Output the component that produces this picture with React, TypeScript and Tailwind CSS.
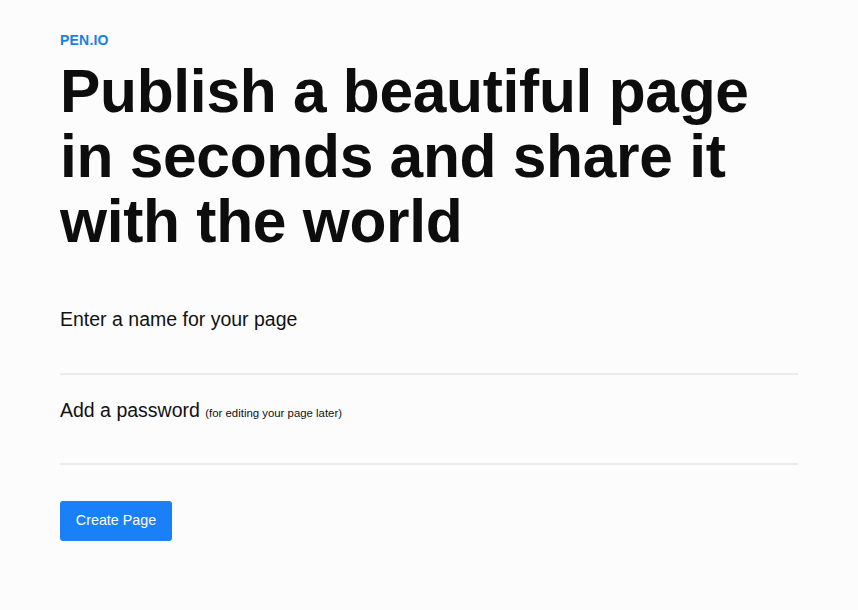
export default function App() {
  return (
    <div className="min-h-[610px] bg-[#fcfcfc] font-['Liberation_Sans',Arial,sans-serif] text-[#111]">
      <div className="px-[60px] pt-[32px]">
        <div className="text-[14px] font-bold leading-[16px] tracking-[0.2px] text-[#1a7fe8]">PEN.IO</div>
        <h1 className="mt-[11px] text-[60.5px] font-bold leading-[65px] tracking-[-0.3px] text-[#0d0d0d]">
          Publish a beautiful page
          <br />
          in seconds and share it
          <br />
          with the world
        </h1>
        <form className="mt-[53px] w-[738px]">
          <label className="block">
            <span className="block text-[19.5px] leading-[24px]">Enter a name for your page</span>
            <input type="text" className="mt-[8px] block h-[36px] w-full border-b-2 border-[#ebebeb] bg-transparent outline-none" />
          </label>
          <label className="mt-[23px] block">
            <span className="block text-[19.5px] leading-[24px]">
              Add a password <span className="text-[11.4px]">(for editing your page later)</span>
            </span>
            <input type="password" className="mt-[4px] block h-[36px] w-full border-b-2 border-[#ebebeb] bg-transparent outline-none" />
          </label>
          <button type="button" className="mt-[36px] h-[40px] w-[112px] rounded-[3px] bg-[#1a80f7] text-[14.3px] text-white">
            Create Page
          </button>
        </form>
      </div>
    </div>
  );
}
